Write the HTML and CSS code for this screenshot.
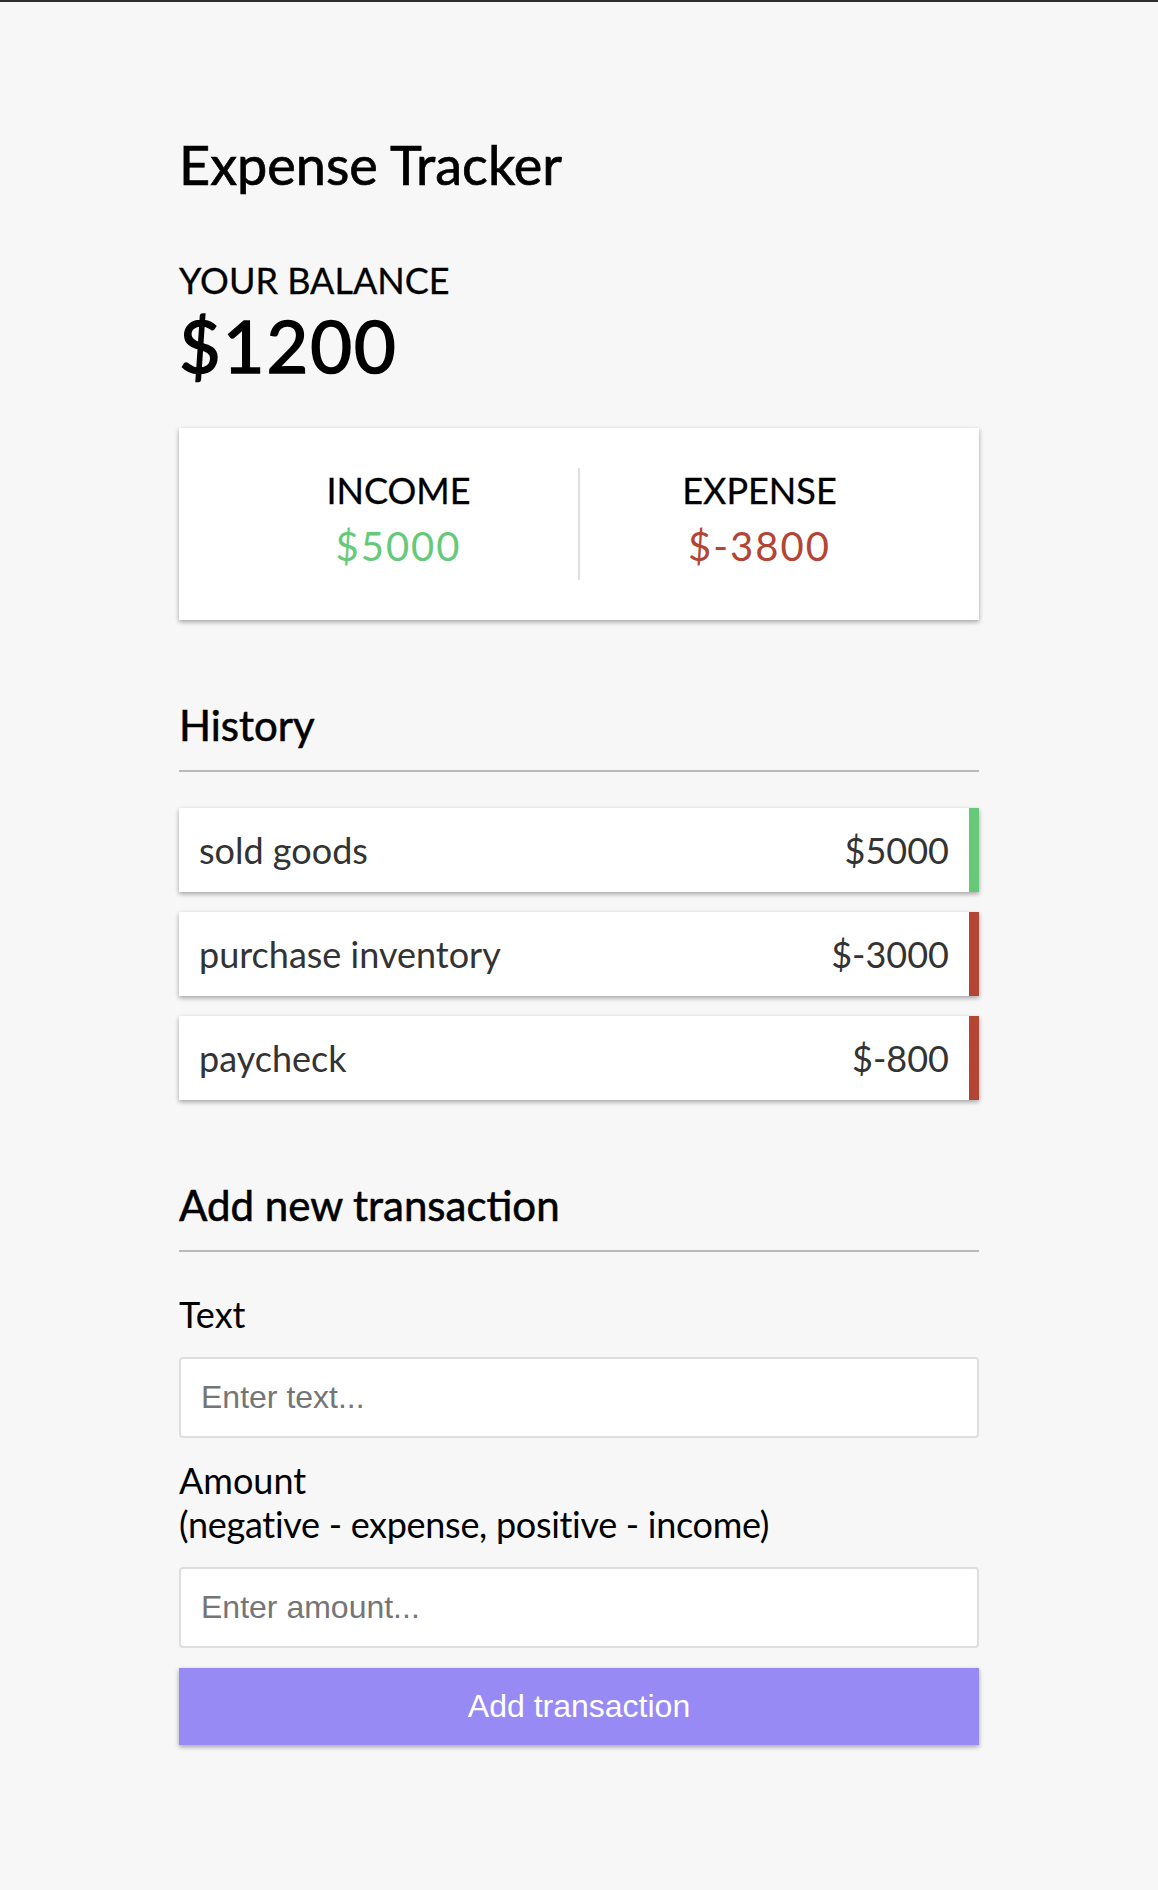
FILE: index.html
```html
<!DOCTYPE html>
<html lang="en">
<head>
<meta charset="UTF-8">
<title>Expense Tracker</title>
<link rel="stylesheet" href="styles.css">
</head>
<body class="page">
  <div class="app">
    <h2 class="title">Expense Tracker</h2>
    <div class="container">
      <h4 class="caps">Your Balance</h4>
      <h1 class="balance">$1200</h1>

      <div class="inc-exp">
        <div class="inc-exp__col inc-exp__col--first">
          <h4 class="caps">Income</h4>
          <p class="money money--plus">$5000</p>
        </div>
        <div class="inc-exp__col">
          <h4 class="caps">Expense</h4>
          <p class="money money--minus">$-3800</p>
        </div>
      </div>

      <h3 class="section-title">History</h3>
      <ul class="list">
        <li class="list__item list__item--plus"><span>sold goods</span><span>$5000</span></li>
        <li class="list__item list__item--minus"><span>purchase inventory</span><span>$-3000</span></li>
        <li class="list__item list__item--minus"><span>paycheck</span><span>$-800</span></li>
      </ul>

      <h3 class="section-title">Add new transaction</h3>
      <form class="form">
        <div class="form-control">
          <label class="form-label" for="text">Text</label>
          <input class="form-input" type="text" id="text" placeholder="Enter text...">
        </div>
        <div class="form-control">
          <label class="form-label" for="amount">Amount <br><span class="form-hint">(negative - expense, positive - income)</span></label>
          <input class="form-input" type="number" id="amount" placeholder="Enter amount...">
        </div>
        <button class="btn" type="button">Add transaction</button>
      </form>
    </div>
  </div>
</body>
</html>
```

FILE: styles.css
```css
* {
  box-sizing: border-box;
}

.page {
  margin: 0;
  background-color: #f7f7f7;
  border-top: 2px solid #2e2e2e;
  font-family: "Lato", "Noto Sans", sans-serif;
  font-size: 36px;
  color: #000;
}

.app {
  width: 800px;
  margin: 0 auto;
  padding-top: 130px;
  padding-bottom: 60px;
}

.title {
  font-size: 54px;
  font-weight: normal;
  -webkit-text-stroke: 0.7px #000;
  margin: 0 0 61px;
}

.caps {
  font-size: 36px;
  font-weight: normal;
  -webkit-text-stroke: 0.3px #000;
  text-transform: uppercase;
  margin: 0;
}

.balance {
  font-size: 72px;
  font-weight: normal;
  -webkit-text-stroke: 1.6px #000;
  letter-spacing: 2px;
  margin: 0;
}

.inc-exp {
  background-color: #fff;
  box-shadow: 0 2px 6px rgba(0, 0, 0, 0.12), 0 2px 4px rgba(0, 0, 0, 0.24);
  padding: 40px;
  display: flex;
  margin: 40px 0;
}

.inc-exp__col {
  flex: 1;
  text-align: center;
}

.inc-exp__col--first {
  border-right: 2px solid #dedede;
}

.money {
  font-size: 40px;
  letter-spacing: 2px;
  margin: 10px 0;
}

.money--plus {
  color: #66c97a;
}

.money--minus {
  color: #b44434;
}

.section-title {
  font-size: 42px;
  font-weight: normal;
  -webkit-text-stroke: 0.6px #000;
  border-bottom: 2px solid #bbb;
  padding-bottom: 20px;
  margin: 80px 0 20px;
}

.list {
  list-style-type: none;
  padding: 0;
  margin: 36px 0 80px;
}

.list__item {
  background-color: #fff;
  box-shadow: 0 2px 6px rgba(0, 0, 0, 0.12), 0 2px 4px rgba(0, 0, 0, 0.24);
  color: #333;
  display: flex;
  justify-content: space-between;
  padding: 20px;
  line-height: 44px;
  margin: 20px 0;
}

.list__item--plus {
  border-right: 10px solid #66c97a;
}

.list__item--minus {
  border-right: 10px solid #b44434;
}

.form-label {
  display: inline-block;
  margin: 20px 0 21px;
}

.form-hint {
  letter-spacing: -0.3px;
}

.form-input {
  display: block;
  width: 100%;
  font-family: "Liberation Sans", Arial, sans-serif;
  font-size: 32px;
  padding: 20px;
  border: 2px solid #dedede;
  border-radius: 4px;
  background: #fff;
  color: #333;
}

.form-input::placeholder {
  color: #757575;
}

.btn {
  display: block;
  width: 100%;
  cursor: pointer;
  background-color: #988af5;
  box-shadow: 0 2px 6px rgba(0, 0, 0, 0.12), 0 2px 4px rgba(0, 0, 0, 0.24);
  color: #fff;
  border: 0;
  font-family: "Liberation Sans", Arial, sans-serif;
  font-size: 32px;
  margin: 20px 0 60px;
  padding: 20px;
}
```
